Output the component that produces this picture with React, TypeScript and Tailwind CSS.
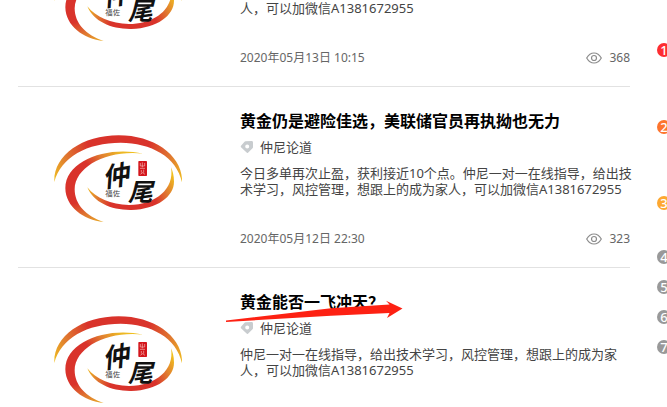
type Post = {
  title?: string;
  category?: string;
  lines: string[];
  date?: string;
  views?: number;
  marked?: boolean;
};

const POSTS: Post[] = [
  {
    lines: ["人，可以加微信A1381672955"],
    date: "2020年05月13日 10:15",
    views: 368,
  },
  {
    title: "黄金仍是避险佳选，美联储官员再执拗也无力",
    category: "仲尼论道",
    lines: [
      "今日多单再次止盈，获利接近10个点。仲尼一对一在线指导，给出技",
      "术学习，风控管理，想跟上的成为家人，可以加微信A1381672955",
    ],
    date: "2020年05月12日 22:30",
    views: 323,
  },
  {
    title: "黄金能否一飞冲天？",
    category: "仲尼论道",
    lines: [
      "仲尼一对一在线指导，给出技术学习，风控管理，想跟上的成为家",
      "人，可以加微信A1381672955",
    ],
    marked: true,
  },
];

const RANKS = [
  { n: 1, row: "h-[77px]", color: "bg-[#fd2d31]" },
  { n: 2, row: "h-[76px]", color: "bg-[#fd742d]" },
  { n: 3, row: "h-[54px]", color: "bg-[#fda831]" },
  { n: 4, row: "h-[30px]", color: "bg-[#999999]" },
  { n: 5, row: "h-[30px]", color: "bg-[#999999]" },
  { n: 6, row: "h-[30px]", color: "bg-[#999999]" },
  { n: 7, row: "h-[30px]", color: "bg-[#999999]" },
];

function Logo({ id }: { id: string }) {
  return (
    <svg viewBox="42 30 384 264" className="w-32 h-[88px]" role="img" aria-label="仲尾">
      <defs>
        <radialGradient id={`${id}-top`} gradientUnits="userSpaceOnUse" cx="235" cy="35" r="235">
          <stop offset="0.4" stopColor="#d9332b" />
          <stop offset="0.72" stopColor="#e07a30" />
          <stop offset="1" stopColor="#f0c01f" />
        </radialGradient>
        <radialGradient id={`${id}-left`} gradientUnits="userSpaceOnUse" cx="90" cy="165" r="210">
          <stop offset="0.34" stopColor="#d9332b" />
          <stop offset="0.55" stopColor="#e07a30" />
          <stop offset="0.8" stopColor="#ecb526" />
          <stop offset="1" stopColor="#f0c01f" />
        </radialGradient>
        <radialGradient id={`${id}-low`} gradientUnits="userSpaceOnUse" cx="280" cy="250" r="155">
          <stop offset="0.45" stopColor="#d9332b" />
          <stop offset="0.72" stopColor="#e07a30" />
          <stop offset="1" stopColor="#f0c01f" />
        </radialGradient>
      </defs>
      <path
        d="M43 171C40 92 125 31 236 31C344 31 430 94 426 172C410 94 332 54 242 53C142 53 62 96 43 171Z"
        fill={`url(#${id}-top)`}
      />
      <path
        d="M309 86C208 62 76 103 76 190C77 246 130 285 191 291C138 274 104 238 104 193C105 124 203 74 309 86Z"
        fill={`url(#${id}-left)`}
      />
      <path
        d="M142 187C160 232 214 256 274 255C352 252 402 214 402 170C402 152 398 138 393 127C404 191 348 240 267 240C212 239 168 220 142 187Z"
        fill={`url(#${id}-low)`}
      />
      <g className="font-['Noto_Sans_CJK_SC',sans-serif] font-bold italic" fill="#111111">
        <text x="186" y="182" fontSize="80" transform="rotate(-10 226 150)">仲</text>
        <text x="264" y="228" fontSize="74">尾</text>
      </g>
      <text x="196" y="214" fontSize="22" fill="#444444" className="font-['Noto_Sans_CJK_SC',sans-serif]">
        福佐
      </text>
      <rect x="295" y="108" width="26" height="45" rx="2" fill="#d3161c" />
      <path
        d="M301 114v9h13v-9M307 112v15M300 130h15M304 135v8M311 134v9M301 148l7-5 7 5"
        fill="none"
        stroke="#f4b9b6"
        strokeWidth="2"
      />
    </svg>
  );
}

function TagIcon() {
  return (
    <svg viewBox="0 0 14 14" className="w-[14px] h-[14px]" aria-hidden="true">
      <path
        fillRule="evenodd"
        fill="#c8cccf"
        d="M5.4 1.3L11.6 1Q13 1 13 2.4V7.2Q13 7.8 12.5 8.3L8 12.7Q7.3 13.3 6.6 12.6L1 7.2Q.4 6.5 1 5.8L4.3 2Q4.8 1.4 5.4 1.3ZM7.2 4.6a2 2 0 1 0 0 4a2 2 0 1 0 0-4Z"
      />
    </svg>
  );
}

function EyeIcon() {
  return (
    <svg viewBox="0 0 16 12" className="w-4 h-3" fill="none" stroke="#8c8c8c" aria-hidden="true">
      <path d="M.7 6C2.6 2.6 5 1 8 1s5.400 1.600 7.300 5C13.400 9.400 11 11 8 11S2.600 9.400.7 6Z" strokeWidth="1.200" />
      <circle cx="8" cy="6" r="2.500" strokeWidth="1.200" />
    </svg>
  );
}

function PostItem({ post, id }: { post: Post; id: string }) {
  return (
    <article className="relative flex min-h-[181px] border-b border-[#e2e2e2]">
      <div className="w-[222px] shrink-0 pl-9 pt-12">
        <Logo id={id} />
      </div>
      <div className="flex min-w-0 flex-1 flex-col justify-end pb-5 pt-[22px]">
        {post.title && (
          <h2 className="whitespace-nowrap text-[16px] leading-6 font-bold text-black">
            <a href="#">{post.title}</a>
          </h2>
        )}
        {post.category && (
          <a href="#" className="mt-1 mb-2 flex h-5 items-center gap-[6px] text-[13px] leading-5 text-[#444444]">
            <TagIcon />
            {post.category}
          </a>
        )}
        <p className="whitespace-nowrap text-[13px] leading-4 text-[#444444]">
          {post.lines.map((line) => (
            <span key={line} className="block">{line}</span>
          ))}
        </p>
        <div className="mt-[34px] flex h-4 items-center justify-between text-[12px] leading-4 text-[#666666]">
          <time>{post.date}</time>
          {post.views && (
            <span className="flex items-center gap-[7px]">
              <EyeIcon />
              {post.views}
            </span>
          )}
        </div>
      </div>
      {post.marked && (
        <svg viewBox="0 0 177 22" className="absolute left-[208px] top-8 w-[177px] h-[22px]" aria-hidden="true">
          <path d="M0 20.500L105 8.200L163.500 4.600L160 .8L176.500 8.500L161 18L163.500 13L105 15.800L0 22Z" fill="#fd2113" />
        </svg>
      )}
    </article>
  );
}

export default function App() {
  return (
    <div className="flex h-screen gap-[27px] overflow-hidden bg-white pl-[18px] font-['Noto_Sans','Noto_Sans_CJK_SC',sans-serif]">
      <main className="-mt-[94px] min-w-0 flex-1">
        {POSTS.map((post, i) => (
          <PostItem key={i} post={post} id={`logo${i}`} />
        ))}
      </main>
      {/* Ranking column, cut by the window edge */}
      <aside className="w-[10px] shrink-0 overflow-hidden pt-[43px]">
        <ol>
          {RANKS.map(({ n, row, color }) => (
            <li key={n} className={row}>
              <span className={`flex h-[14px] w-[14px] items-center justify-center rounded-full text-[13px] leading-[14px] font-medium text-white ${color}`}>
                {n}
              </span>
            </li>
          ))}
        </ol>
      </aside>
    </div>
  );
}
